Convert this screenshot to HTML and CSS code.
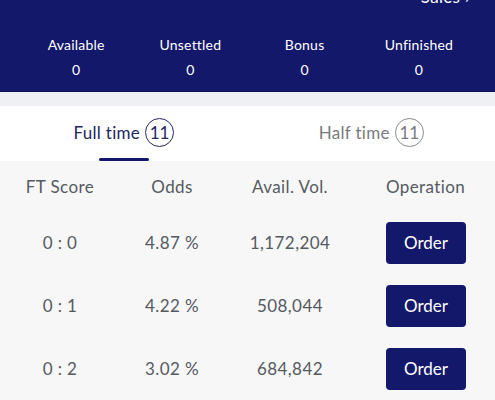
FILE: index.html
```html
<!DOCTYPE html>
<html lang="en">
<head>
    <meta charset="UTF-8">
    <meta name="viewport" content="width=device-width, initial-scale=1.0">
    <title>Correct Score</title>
    <link rel="stylesheet" href="styles.css">
</head>
<body>
    <div class="header">
        <div class="sales-link">Sales &rsaquo;</div>
        <div class="stats">
            <div class="stat"><span class="stat-label">Available</span><span class="stat-value">0</span></div>
            <div class="stat"><span class="stat-label">Unsettled</span><span class="stat-value">0</span></div>
            <div class="stat"><span class="stat-label">Bonus</span><span class="stat-value">0</span></div>
            <div class="stat"><span class="stat-label">Unfinished</span><span class="stat-value">0</span></div>
        </div>
    </div>

    <div class="band"></div>

    <div class="tabs">
        <div class="tab active">
            <span class="tab-label">Full time</span>
            <span class="count">11</span>
        </div>
        <div class="tab">
            <span class="tab-label">Half time</span>
            <span class="count">11</span>
        </div>
    </div>

    <div class="table">
        <div class="row head">
            <div>FT Score</div>
            <div>Odds</div>
            <div>Avail. Vol.</div>
            <div>Operation</div>
        </div>
        <div class="row">
            <div>0 : 0</div>
            <div>4.87 %</div>
            <div>1,172,204</div>
            <div><button class="order">Order</button></div>
        </div>
        <div class="row">
            <div>0 : 1</div>
            <div>4.22 %</div>
            <div>508,044</div>
            <div><button class="order">Order</button></div>
        </div>
        <div class="row">
            <div>0 : 2</div>
            <div>3.02 %</div>
            <div>684,842</div>
            <div><button class="order">Order</button></div>
        </div>
    </div>
</body>
</html>
```

FILE: styles.css
```css
body {
    margin: 0;
    font-family: Lato, "Open Sans", sans-serif;
    background-color: #f7f7f8;
    color: #555a60;
    overflow: hidden;
}

.header {
    display: flow-root;
    background-color: #13186b;
    color: #fff;
    height: 91px;
    border-bottom: 1px solid #0c1052;
}

.sales-link {
    margin-top: -13px;
    height: 20px;
    line-height: 20px;
    font-size: 17px;
    letter-spacing: 0.3px;
    text-align: right;
    padding-right: 25px;
}

.stats {
    display: grid;
    grid-template-columns: repeat(4, 1fr);
    padding: 29px 19px 0;
}

.stat {
    display: flex;
    flex-direction: column;
    align-items: center;
    gap: 7px;
    font-size: 14px;
    letter-spacing: 0.2px;
    line-height: 18px;
}

.band {
    height: 14px;
    background-color: #eff0f3;
}

.tabs {
    display: flex;
    height: 55px;
    background-color: #fff;
}

.tab {
    flex: 1;
    display: flex;
    justify-content: center;
    align-items: center;
    gap: 5px;
    padding-bottom: 3px;
    position: relative;
    font-size: 17px;
    letter-spacing: 0.3px;
    color: #7a7a7e;
}

.tab .count {
    width: 27px;
    height: 27px;
    border: 1.5px solid #8a8a8e;
    border-radius: 50%;
    display: flex;
    justify-content: center;
    align-items: center;
    font-size: 17px;
    letter-spacing: 0;
}

.tab.active {
    color: #23285f;
}

.tab.active .count {
    border-color: #23285f;
}

.tab.active::after {
    content: "";
    position: absolute;
    bottom: 0;
    left: 50%;
    width: 50px;
    height: 3px;
    margin-left: -25px;
    border-radius: 2px;
    background-color: #13186b;
}

.row {
    display: grid;
    grid-template-columns: 120px 104px 132px 1fr;
    align-items: center;
    height: 63px;
    font-size: 17px;
    letter-spacing: 0.4px;
    text-align: center;
}

.row.head {
    height: 50px;
}

.order {
    width: 80px;
    height: 42px;
    margin-left: 1px;
    border: none;
    border-radius: 4px;
    background-color: #13186b;
    color: #fff;
    font-family: inherit;
    font-size: 17px;
    letter-spacing: 0;
}
```
